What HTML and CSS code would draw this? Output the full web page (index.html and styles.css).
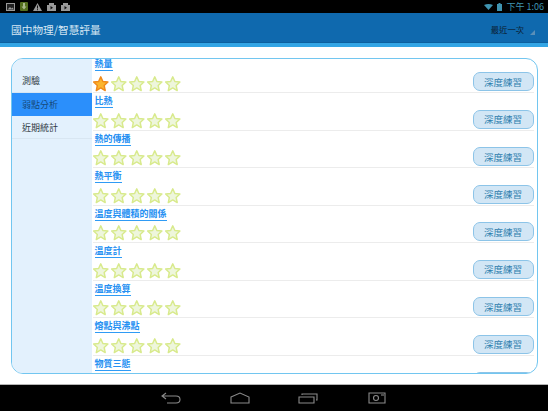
FILE: index.html
```html
<!DOCTYPE html>
<html lang="zh-Hant">
<head>
    <meta charset="UTF-8">
    <title>國中物理/智慧評量</title>
    <link rel="stylesheet" href="styles.css">
</head>
<body>
    <svg class="defs" width="0" height="0">
        <symbol id="star" viewBox="0 0 24 24">
            <path d="M12 2.500l2.900 6.400 6.900.8-5.100 4.700 1.400 6.900-6.100-3.500-6.100 3.500 1.400-6.900-5.100-4.700 6.900-.8z"/>
        </symbol>
    </svg>

    <div class="status-bar">
        <div class="status-icons">
            <svg width="9" height="8" viewBox="0 0 9 8"><rect x=".5" y=".5" width="8" height="7" fill="#222" stroke="#999"/><path d="M1.500 6.500l2.500-2.500 1.500 1.500 1-1 1.500 2z" fill="#999"/></svg>
            <svg width="8" height="9" viewBox="0 0 8 9"><rect width="8" height="9" rx="1" fill="#55701f"/><path d="M3 1h2v3.500h1.500L4 7.500 1.500 4.500H3z" fill="#a9b98a"/></svg>
            <svg width="9" height="8" viewBox="0 0 9 8"><path d="M4.500 0L9 8H0z" fill="#999"/><rect x="4" y="2.500" width="1" height="3" fill="#111"/><rect x="4" y="6.200" width="1" height="1" fill="#111"/></svg>
            <svg width="9" height="8" viewBox="0 0 9 8"><path d="M0 2h2V0h5v2h2v6H0z" fill="#999"/><path d="M3.500 3L6 4.700 3.500 6.400z" fill="#111"/></svg>
            <svg width="9" height="8" viewBox="0 0 9 8"><path d="M0 2h2V0h5v2h2v6H0z" fill="#999"/><path d="M3.500 3L6 4.700 3.500 6.400z" fill="#111"/></svg>
        </div>
        <div class="status-right">
            <svg width="9" height="6" viewBox="0 0 9 6"><path d="M0 1Q4.500-1 9 1L4.500 6z" fill="#3f93b0"/></svg>
            <svg width="5" height="8" viewBox="0 0 5 8"><rect x="1.500" width="2" height="1" fill="#3f93b0"/><rect y="1" width="5" height="7" fill="#3f93b0"/></svg>
            <span class="clock">下午 1:06</span>
        </div>
    </div>

    <header class="action-bar">
        <h1>國中物理/智慧評量</h1>
        <div class="spinner">最近一次</div>
    </header>

    <main class="content">
        <div class="card">
            <nav class="side">
                <a class="side-item first">測驗</a>
                <a class="side-item active">弱點分析</a>
                <a class="side-item">近期統計</a>
            </nav>
            <div class="list">
                <div class="row">
                    <div class="info">
                        <a class="topic">熱量</a>
                        <div class="stars">
                            <svg class="star gold"><use href="#star"/></svg>
                            <svg class="star"><use href="#star"/></svg>
                            <svg class="star"><use href="#star"/></svg>
                            <svg class="star"><use href="#star"/></svg>
                            <svg class="star"><use href="#star"/></svg>
                        </div>
                    </div>
                    <button class="practice">深度練習</button>
                </div>
                <div class="row">
                    <div class="info">
                        <a class="topic">比熱</a>
                        <div class="stars">
                            <svg class="star"><use href="#star"/></svg>
                            <svg class="star"><use href="#star"/></svg>
                            <svg class="star"><use href="#star"/></svg>
                            <svg class="star"><use href="#star"/></svg>
                            <svg class="star"><use href="#star"/></svg>
                        </div>
                    </div>
                    <button class="practice">深度練習</button>
                </div>
                <div class="row">
                    <div class="info">
                        <a class="topic">熱的傳播</a>
                        <div class="stars">
                            <svg class="star"><use href="#star"/></svg>
                            <svg class="star"><use href="#star"/></svg>
                            <svg class="star"><use href="#star"/></svg>
                            <svg class="star"><use href="#star"/></svg>
                            <svg class="star"><use href="#star"/></svg>
                        </div>
                    </div>
                    <button class="practice">深度練習</button>
                </div>
                <div class="row">
                    <div class="info">
                        <a class="topic">熱平衡</a>
                        <div class="stars">
                            <svg class="star"><use href="#star"/></svg>
                            <svg class="star"><use href="#star"/></svg>
                            <svg class="star"><use href="#star"/></svg>
                            <svg class="star"><use href="#star"/></svg>
                            <svg class="star"><use href="#star"/></svg>
                        </div>
                    </div>
                    <button class="practice">深度練習</button>
                </div>
                <div class="row">
                    <div class="info">
                        <a class="topic">溫度與體積的關係</a>
                        <div class="stars">
                            <svg class="star"><use href="#star"/></svg>
                            <svg class="star"><use href="#star"/></svg>
                            <svg class="star"><use href="#star"/></svg>
                            <svg class="star"><use href="#star"/></svg>
                            <svg class="star"><use href="#star"/></svg>
                        </div>
                    </div>
                    <button class="practice">深度練習</button>
                </div>
                <div class="row">
                    <div class="info">
                        <a class="topic">溫度計</a>
                        <div class="stars">
                            <svg class="star"><use href="#star"/></svg>
                            <svg class="star"><use href="#star"/></svg>
                            <svg class="star"><use href="#star"/></svg>
                            <svg class="star"><use href="#star"/></svg>
                            <svg class="star"><use href="#star"/></svg>
                        </div>
                    </div>
                    <button class="practice">深度練習</button>
                </div>
                <div class="row">
                    <div class="info">
                        <a class="topic">溫度換算</a>
                        <div class="stars">
                            <svg class="star"><use href="#star"/></svg>
                            <svg class="star"><use href="#star"/></svg>
                            <svg class="star"><use href="#star"/></svg>
                            <svg class="star"><use href="#star"/></svg>
                            <svg class="star"><use href="#star"/></svg>
                        </div>
                    </div>
                    <button class="practice">深度練習</button>
                </div>
                <div class="row">
                    <div class="info">
                        <a class="topic">熔點與沸點</a>
                        <div class="stars">
                            <svg class="star"><use href="#star"/></svg>
                            <svg class="star"><use href="#star"/></svg>
                            <svg class="star"><use href="#star"/></svg>
                            <svg class="star"><use href="#star"/></svg>
                            <svg class="star"><use href="#star"/></svg>
                        </div>
                    </div>
                    <button class="practice">深度練習</button>
                </div>
                <div class="row">
                    <div class="info">
                        <a class="topic">物質三態</a>
                        <div class="stars">
                            <svg class="star"><use href="#star"/></svg>
                            <svg class="star"><use href="#star"/></svg>
                            <svg class="star"><use href="#star"/></svg>
                            <svg class="star"><use href="#star"/></svg>
                            <svg class="star"><use href="#star"/></svg>
                        </div>
                    </div>
                    <button class="practice">深度練習</button>
                </div>
            </div>
        </div>
    </main>

    <footer class="nav-bar">
        <svg class="nav-icon" viewBox="0 0 20 12"><path d="M5 1L1 4l4 3M1 4h14q4 0 4 3.500T15 11H6"/></svg>
        <svg class="nav-icon" viewBox="0 0 20 12"><path d="M1 5l9-4 9 4v6H1z"/></svg>
        <svg class="nav-icon" viewBox="0 0 20 12"><path d="M1 5h15v6H1zM4 3V2h15v6h-1"/></svg>
        <svg class="nav-icon" viewBox="0 0 20 12"><path d="M2 1h16v10H2z"/><circle cx="9" cy="6" r="2.500"/><path d="M14 3h3"/></svg>
    </footer>
</body>
</html>
```

FILE: styles.css
```css
html, body {
    margin: 0;
    padding: 0;
}
body {
    width: 548px;
    height: 411px;
    overflow: hidden;
    display: flex;
    flex-direction: column;
    background: #fff;
    font-family: "Noto Sans CJK TC", "Liberation Sans", sans-serif;
}
.defs {
    display: block;
    height: 0;
}

/* status bar */
.status-bar {
    height: 13px;
    flex: none;
    background: #000;
    display: flex;
    justify-content: space-between;
    align-items: center;
    padding: 0 4px 0 6px;
}
.status-icons {
    display: flex;
    align-items: center;
    gap: 5px;
}
.status-right {
    display: flex;
    align-items: center;
    gap: 4px;
    color: #3f93b0;
}
.clock {
    font-size: 9px;
    white-space: nowrap;
}

/* action bar */
.action-bar {
    height: 26px;
    flex: none;
    background: #0f69ae;
    border-bottom: 1px solid #0c5f9e;
    display: flex;
    justify-content: space-between;
    align-items: center;
    padding: 3px 13px 0 11px;
    position: relative;
}
.action-bar::after {
    content: "";
    position: absolute;
    left: 0;
    right: 0;
    bottom: -5px;
    height: 4px;
    background: #33a5e5;
}
.action-bar h1 {
    margin: 0;
    font-size: 10.7px;
    font-weight: normal;
    color: #d5e6f3;
}
.spinner {
    font-size: 8.3px;
    color: #0b2236;
    padding-right: 11px;
    position: relative;
}
.spinner::after {
    content: "";
    position: absolute;
    right: 0;
    bottom: 0;
    border-style: solid;
    border-width: 0 0 5px 5px;
    border-color: transparent transparent #5a8fb8 transparent;
}

/* card */
.content {
    flex: 1;
    min-height: 0;
    padding: 12px 10px 10px 11px;
    margin-top: 3px;
    border-bottom: 1px solid #b5b5b5;
}
.card {
    height: 100%;
    box-sizing: border-box;
    display: flex;
    border: 1.5px solid #72c6f0;
    border-radius: 12px;
    overflow: hidden;
    background: #fff;
}
.side {
    width: 79.500px;
    flex: none;
    background: #e3f1fd;
    font-size: 9px;
}
.side-item {
    display: flex;
    align-items: center;
    height: 23px;
    padding-left: 10px;
    color: #2f3a44;
    border-bottom: 1px solid #d8e6f2;
    box-sizing: border-box;
}
.side-item.first {
    height: 34px;
    padding-top: 10px;
}
.side-item.active {
    background: #2b8ffb;
    color: #174a7c;
    border-bottom: none;
}

/* topic list */
.list {
    flex: 1;
    min-width: 0;
    overflow: hidden;
    padding: 0 3.500px 0 1px;
}
.row {
    height: 37.450px;
    box-sizing: border-box;
    display: flex;
    justify-content: space-between;
    align-items: flex-end;
    border-bottom: 1px solid #ececec;
}
.row:first-child {
    margin-top: -3px;
}
.info {
    display: flex;
    flex-direction: column;
    align-items: flex-start;
    height: 100%;
    padding-top: 1px;
    box-sizing: border-box;
}
.topic {
    font-size: 9px;
    font-weight: bold;
    line-height: 13px;
    color: #2590f2;
    margin-left: 2px;
    border-bottom: 1.5px solid #2f9bf5;
}
.stars {
    display: flex;
    align-items: center;
    gap: 0.600px;
    margin-top: 3.500px;
    margin-left: -1px;
}
.star {
    width: 17.500px;
    height: 17.500px;
    fill: #eef6dc;
    stroke: #d8ea8c;
    stroke-width: 2;
    stroke-linejoin: round;
}
.star.gold {
    fill: #fbb52e;
    stroke: #f08a1c;
}
.practice {
    width: 61px;
    height: 19px;
    padding: 0;
    margin-bottom: 1px;
    border: 1.5px solid #8cc4e8;
    border-radius: 7px;
    background: #d2e6f5;
    color: #2f80ae;
    font-family: inherit;
    font-size: 9.500px;
}

/* nav bar */
.nav-bar {
    height: 26px;
    flex: none;
    background: #000;
    display: flex;
    justify-content: center;
    align-items: center;
}
.nav-icon {
    width: 20px;
    height: 12px;
    margin: 0 24.350px;
    fill: none;
    stroke: #8a8a8a;
    stroke-width: 1.100;
}
```
